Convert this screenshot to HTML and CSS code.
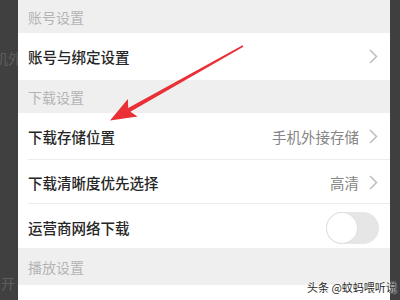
FILE: index.html
```html
<!DOCTYPE html>
<html lang="zh">
<head>
<meta charset="utf-8">
<link rel="stylesheet" href="styles.css">
</head>
<body>
<div class="screen">
  <div class="side side-left">
    <span class="ghost ghost-1">机外</span>
    <span class="ghost ghost-2">开</span>
  </div>
  <div class="panel">
    <div class="header h1">账号设置</div>
    <div class="row r1">
      <span class="label">账号与绑定设置</span>
      <span class="right"><svg class="chev" viewBox="0 0 9 15"><polyline points="1,1 7.5,7.5 1,14"/></svg></span>
    </div>
    <div class="header h2">下载设置</div>
    <div class="row r2 divided">
      <span class="label">下载存储位置</span>
      <span class="right"><span class="value">手机外接存储</span><svg class="chev" viewBox="0 0 9 15"><polyline points="1,1 7.5,7.5 1,14"/></svg></span>
    </div>
    <div class="row r3 divided">
      <span class="label">下载清晰度优先选择</span>
      <span class="right"><span class="value">高清</span><svg class="chev" viewBox="0 0 9 15"><polyline points="1,1 7.5,7.5 1,14"/></svg></span>
    </div>
    <div class="row r4">
      <span class="label">运营商网络下载</span>
      <span class="toggle"><span class="knob"></span></span>
    </div>
    <div class="header h3">播放设置</div>
    <div class="tail"></div>
  </div>
  <div class="side side-right"></div>
</div>
<svg class="arrow" viewBox="0 0 400 300" width="400" height="300">
  <polygon points="242.6,45.3 128.2,107.9 127.9,99.1 110,120.5 137.6,116.6 130.3,111.7 243.4,46.7" fill="#ea2f36"/>
</svg>
<div class="watermark">头条 @蚊蚂喂听说</div>
</body>
</html>
```
FILE: styles.css
```css
* { box-sizing: border-box; }
html, body { margin: 0; padding: 0; }
body {
  width: 400px;
  height: 300px;
  overflow: hidden;
  position: relative;
  font-family: "Noto Sans CJK SC", "Noto Sans", sans-serif;
  background: #fff;
}
.screen {
  display: flex;
  width: 400px;
  height: 300px;
}
.side {
  background: #404040;
  flex: none;
  position: relative;
  overflow: hidden;
}
.side-left { width: 18px; }
.side-right { width: 10px; background: #3f3f3f; }
.ghost {
  position: absolute;
  color: #5e5e5e;
  font-size: 14px;
  line-height: 1;
  white-space: nowrap;
}
.ghost-1 { left: -6px; top: 51px; }
.ghost-2 { left: 1px; top: 276px; }
.panel {
  flex: 1;
  display: flex;
  flex-direction: column;
  background: #fff;
}
.header {
  background: #efefef;
  color: #b4b4b4;
  font-size: 14px;
  padding-left: 10px;
  display: flex;
  align-items: center;
  flex: none;
}
.h1 { height: 33px; }
.h2 { height: 33px; }
.h3 { height: 37px; }
.row {
  display: flex;
  align-items: center;
  justify-content: space-between;
  padding: 0 12px 0 10px;
  background: #fff;
  position: relative;
  flex: none;
}
.r1 { height: 47px; }
.r2 { height: 47px; }
.r3 { height: 44px; }
.r4 { height: 44px; padding-right: 11px; padding-top: 3px; }
.divided::after {
  content: "";
  position: absolute;
  left: 10px;
  right: 0;
  bottom: 0;
  height: 1px;
  background: #ececec;
}
.label {
  font-size: 14.5px;
  color: #262626;
  font-weight: 500;
}
.right {
  display: flex;
  align-items: center;
  gap: 10px;
}
.value {
  font-size: 14.5px;
  color: #858585;
}
.chev {
  width: 9px;
  height: 15px;
  fill: none;
  stroke: #bdbdbd;
  stroke-width: 1.5;
}
.toggle {
  width: 53px;
  height: 32px;
  border-radius: 16px;
  background: #e6e6e6;
  display: flex;
  align-items: center;
  padding-left: 1px;
}
.knob {
  width: 30px;
  height: 30px;
  border-radius: 50%;
  background: #fff;
  box-shadow: 0 0 0 1px #e0e0e0;
}
.tail { flex: 1; background: #fff; }
.arrow {
  position: absolute;
  left: 0;
  top: 0;
  pointer-events: none;
}
.watermark {
  position: absolute;
  left: 307px;
  top: 280px;
  font-size: 11px;
  line-height: 14px;
  color: #2a2a2a;
  white-space: nowrap;
  text-shadow: 0 0 2px #fff, 0 0 2px #fff;
}
```
